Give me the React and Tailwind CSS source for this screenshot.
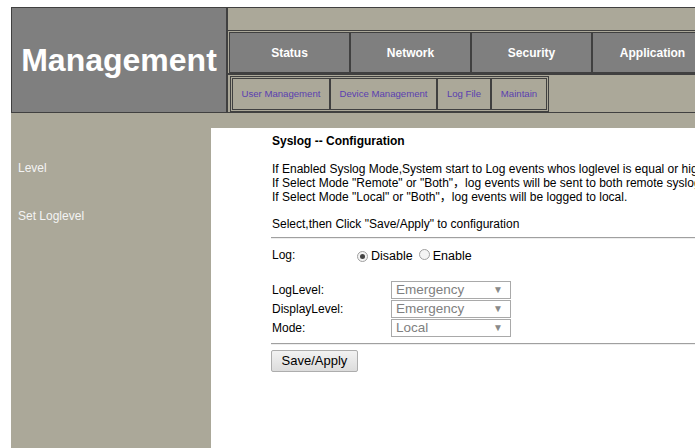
import React from 'react';

const navItems = ['Status', 'Network', 'Security', 'Application'];
const subItems = [
  { label: 'User Management', w: 'w-[98px]' },
  { label: 'Device Management', w: 'w-[107px]' },
  { label: 'Log File', w: 'w-[54px]' },
  { label: 'Maintain', w: 'w-[56px]' },
];

const Select = ({ value }) => (
  <div className="w-[120px] h-[18px] border border-[#a9a9a9] bg-white flex items-center justify-between pl-[4px] pr-[7px]">
    <span className="text-[13.5px] leading-none text-[#808080]">{value}</span>
    <span className="text-[10px] leading-none text-[#8a8a8a]">▼</span>
  </div>
);

const Radio = ({ checked }) => (
  <span className="inline-flex w-[11px] h-[11px] rounded-full border border-[#a0a0a0] bg-[#f4f4f4] items-center justify-center">
    {checked && <span className="w-[5px] h-[5px] rounded-full bg-[#444]" />}
  </span>
);

export default function App() {
  return (
    <div className="w-[695px] h-[448px] overflow-hidden bg-white font-['Liberation_Sans','Noto_Sans_CJK_SC',sans-serif]">
      <div className="ml-[11px] pt-[7px] w-[900px]">
        {/* header */}
        <div className="flex h-[106px] border border-[#404040] bg-[#aba899]">
          <div className="w-[216px] bg-[#7f7f7f] border-r-2 border-[#404040] flex items-center justify-center">
            <span className="text-[32px] font-bold text-white">Management</span>
          </div>
          <div className="flex-1 flex flex-col">
            <div className="h-[23px] border-b border-[#404040]" />
            <div className="flex h-[44px] border-b-2 border-[#404040] pl-[1px] pt-[1px]">
              {navItems.map((n) => (
                <div
                  key={n}
                  className="w-[121px] bg-[#7f7f7f] border border-[#404040] flex items-center justify-center"
                >
                  <span className="text-[12px] font-bold text-white">{n}</span>
                </div>
              ))}
            </div>
            <div className="flex flex-1 pt-[1px]">
              <div className="flex border border-[#404040] p-[1px] ml-[2px]">
                {subItems.map((s) => (
                  <div
                    key={s.label}
                    className={`${s.w} border border-[#404040] flex items-center justify-center`}
                  >
                    <span className="text-[9.6px] text-[#5a3fb0]">{s.label}</span>
                  </div>
                ))}
              </div>
            </div>
          </div>
        </div>

        {/* body */}
        <div className="flex bg-[#aba899] h-[335px]">
          <div className="w-[200px] shrink-0 pl-[7px] pt-[46px] text-[12px] text-[#f4f4f4]">
            <div>Level</div>
            <div className="mt-[30px]">Set Loglevel</div>
          </div>
          <div className="flex-1 mt-[15px] bg-white pl-[61px] pt-[6px] text-[12px] text-black">
            <div className="font-bold leading-[14px]">Syslog -- Configuration</div>
            <div className="mt-[14px] leading-[14px] whitespace-nowrap">
              <div>If Enabled Syslog Mode,System start to Log events whos loglevel is equal or higher than the LogLevel.</div>
              <div>If Select Mode "Remote" or "Both"，log events will be sent to both remote syslog server.</div>
              <div>If Select Mode "Local" or "Both"，log events will be logged to local.</div>
            </div>
            <div className="mt-[13px] leading-[14px]">Select,then Click "Save/Apply" to configuration</div>
            <div className="mt-[6px] h-[2px] border-t border-[#a0a0a0] border-b border-b-[#eee] w-[480px] -ml-[1px]" />
            <div className="flex items-center mt-[8px] h-[16px]">
              <span className="w-[85px]">Log:</span>
              <div className="flex items-center mt-[3px] text-[12.5px]">
                <Radio checked />
                <span className="ml-[3px]">Disable</span>
                <span className="ml-[6px]"><Radio /></span>
                <span className="ml-[3px]">Enable</span>
              </div>
            </div>
            <div className="mt-[18px] flex flex-col gap-[1px]">
              {[
                ['LogLevel:', 'Emergency'],
                ['DisplayLevel:', 'Emergency'],
                ['Mode:', 'Local'],
              ].map(([l, v]) => (
                <div key={l} className="flex items-center">
                  <span className="w-[119px]">{l}</span>
                  <Select value={v} />
                </div>
              ))}
            </div>
            <div className="mt-[6px] h-[2px] border-t border-[#a0a0a0] border-b border-b-[#eee] w-[480px] -ml-[1px]" />
            <button className="mt-[5px] -ml-[1px] w-[87px] h-[22px] border border-[#adadad] rounded-[2px] bg-gradient-to-b from-[#f2f2f2] to-[#dcdcdc] text-[13px] text-black">
              Save/Apply
            </button>
          </div>
        </div>
      </div>
    </div>
  );
}
